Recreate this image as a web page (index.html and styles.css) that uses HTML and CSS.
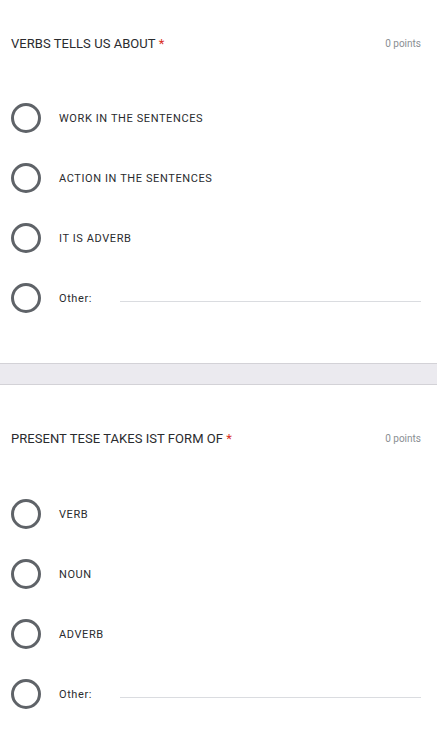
FILE: index.html
```html
<!DOCTYPE html>
<html>
<head>
<meta charset="utf-8">
<link rel="stylesheet" href="styles.css">
</head>
<body>
<section class="question first">
  <div class="q-head">
    <div class="q-title">VERBS TELLS US ABOUT <span class="req">*</span></div>
    <div class="q-points">0 points</div>
  </div>
  <div class="options">
    <div class="opt"><span class="radio"></span><span class="label">WORK IN THE SENTENCES</span></div>
    <div class="opt"><span class="radio"></span><span class="label">ACTION IN THE SENTENCES</span></div>
    <div class="opt"><span class="radio"></span><span class="label">IT IS ADVERB</span></div>
    <div class="opt"><span class="radio"></span><span class="label other">Other:</span><span class="other-line"></span></div>
  </div>
</section>
<div class="divider"></div>
<section class="question second">
  <div class="q-head">
    <div class="q-title">PRESENT TESE TAKES IST FORM OF <span class="req">*</span></div>
    <div class="q-points">0 points</div>
  </div>
  <div class="options">
    <div class="opt"><span class="radio"></span><span class="label">VERB</span></div>
    <div class="opt"><span class="radio"></span><span class="label">NOUN</span></div>
    <div class="opt"><span class="radio"></span><span class="label">ADVERB</span></div>
    <div class="opt"><span class="radio"></span><span class="label other">Other:</span><span class="other-line"></span></div>
  </div>
</section>
</body>
</html>
```
FILE: styles.css
```css
html, body {
  margin: 0;
  padding: 0;
  background: #ffffff;
}
body {
  font-family: Roboto, "Liberation Sans", sans-serif;
  color: #202124;
  width: 437px;
  height: 753px;
  overflow: hidden;
}
.question {
  padding: 0 16px 0 11px;
}
.question.first {
  padding-top: 33px;
  padding-bottom: 35px;
}
.question.second {
  padding-top: 43px;
}
.q-head {
  display: flex;
  justify-content: space-between;
  align-items: center;
  height: 20px;
}
.q-title {
  font-size: 13px;
  letter-spacing: 0.05px;
  color: #2a2b2e;
}
.req {
  color: #d93025;
}
.q-points {
  font-size: 10px;
  color: #8a8e93;
}
.options {
  margin-top: 35px;
  display: flex;
  flex-direction: column;
}
.second .options {
  margin-top: 36px;
}
.opt {
  height: 60px;
  display: flex;
  align-items: center;
}
.radio {
  width: 24px;
  height: 24px;
  border: 3px solid #5f6368;
  border-radius: 50%;
  flex: none;
}
.label {
  margin-left: 18px;
  font-size: 11px;
  letter-spacing: 0.6px;
  color: #2a2b2e;
}
.label.other {
  width: 61px;
  flex: none;
}
.other-line {
  flex: 1;
  height: 1px;
  background: #dadce0;
  margin-top: 6px;
}
.divider {
  height: 20px;
  background: #ebeaef;
  border-top: 1px solid #d3d2d7;
  border-bottom: 1px solid #d3d2d7;
}
```
